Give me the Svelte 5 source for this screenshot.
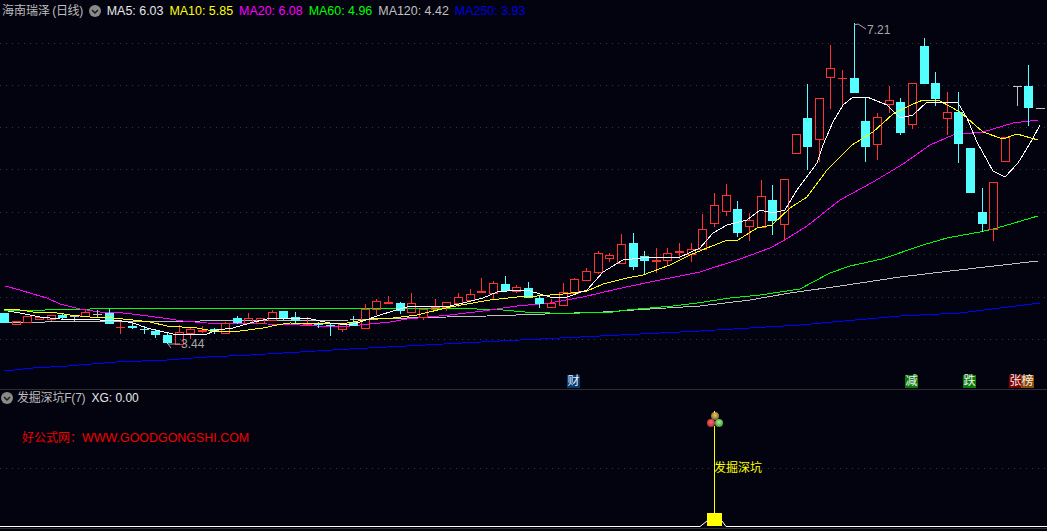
<script>
  const step = 11.64;
  const x0 = 4;

  // c = colour (r red, c cyan, w white), body top/bottom, wick high/low, in screen px
  const bars = [
    ['c',313,323,313,323],['r',321,324,321,324],['r',316,322,316,322],['r',317,319,316,320],
    ['r',315,319,315,321],['c',315,318,313,319],['w',316,316,315,322],['r',312,316,309,317],
    ['w',314,315,310,317],['c',313,324,309,324],['r',327,327,322,334],['c',326,328,323,329],
    ['c',329,330,326,334],['c',331,335,329,338],['c',335,343,332,344],['r',332,344,325,344],
    ['r',329,333,327,339],['f',330,332,326,333],['c',329,332,328,334],['r',323,333,322,334],
    ['c',318,323,316,324],['r',318,323,313,324],['r',318,323,318,323],['r',312,320,310,321],
    ['c',311,318,311,320],['c',317,321,312,324],['f',323,325,317,326],['c',324,325,322,328],
    ['c',325,326,323,336],['r',324,329,323,332],
    ['c',322,326,316,326],['r',309,328,304,328],['r',301,309,299,315],['f',302,304,296,304],
    ['c',303,311,302,314],['r',303,312,293,312],['r',309,317,309,320],['r',307,309,299,310],
    ['r',302,307,302,311],['r',297,303,293,307],['r',294,300,289,300],['f',291,293,278,293],
    ['r',283,293,281,300],['c',284,291,276,292],['r',287,291,285,293],['c',288,298,282,298],
    ['c',298,304,295,308],['r',303,307,299,307],['r',292,305,283,305],['r',279,293,278,293],
    ['r',271,280,268,281],['r',253,272,251,274],['r',255,258,253,262],['r',244,263,234,263],
    ['c',243,267,233,270],['c',256,261,251,274],['f',260,262,248,273],['r',253,260,248,265],
    ['f',251,253,243,259],['r',249,254,243,262],['r',229,249,214,250],['r',205,223,193,227],
    ['r',195,211,184,216],['c',209,233,201,237],['r',220,226,213,241],['r',196,227,180,228],
    ['c',200,221,185,235],['r',179,224,179,241],['r',134,153,134,153],['c',118,147,84,170],
    ['r',98,139,98,162],['r',68,77,45,109],['r',78,78,70,106],['c',78,93,23,93],
    ['c',121,147,98,162],['r',117,144,113,160],['r',100,104,86,113],['c',102,133,98,135],
    ['r',83,124,83,129],['c',46,84,38,84],['c',83,99,72,106],['r',112,118,92,135],
    ['c',112,144,92,163],['c',148,193,148,193],['c',212,224,188,232],['r',182,229,182,241],
    ['r',137,161,137,162],['w',86,86,86,106],['c',86,108,65,126],['w',108,108,108,108]
  ];

  const candles = bars.map(([kind, top, bottom, high, low], i) => ({
    kind, top, bottom, high, low, x: Math.round(x0 + step * i)
  }));

  const ma5 = [[8,311],[20,313],[40,317],[60,319],[100,320],[117,320],[133,323],[147,328],[160,331],[173,334],[207,334],[217,330],[233,328],[250,323],[267,319],[280,318],[307,318],[320,321],[330,323],[350,325],[363,321],[380,315],[393,311],[410,306],[430,306],[450,306],[463,303],[483,298],[497,292],[517,290],[530,291],[550,297],[567,297],[587,290],[603,272],[623,260],[650,257],[680,257],[700,248],[713,233],[727,225],[747,220],[760,210],[773,213],[785,210],[797,190],[817,163],[823,145],[833,122],[843,105],[853,97],[867,97],[887,105],[900,118],[913,115],[927,102],[947,102],[958,103],[967,118],[977,142],[993,171],[1005,177],[1018,163],[1032,140],[1040,125]];
  const ma10 = [[4,309],[20,310],[33,312],[57,313],[70,315],[90,317],[113,318],[133,320],[150,322],[167,326],[197,328],[213,331],[240,331],[263,328],[277,325],[290,323],[333,324],[347,323],[370,319],[393,318],[417,315],[450,307],[467,304],[490,300],[517,297],[537,296],[563,294],[587,291],[603,284],[627,278],[643,275],[670,265],[690,255],[707,248],[725,241],[738,240],[757,228],[772,225],[790,208],[807,197],[827,170],[852,145],[873,132],[893,114],[913,104],[923,100],[940,101],[960,112],[983,132],[1003,139],[1017,134],[1038,140]];
  const ma20 = [[5,286],[20,290],[33,294],[47,298],[60,304],[72,307],[80,309],[100,312],[123,313],[140,315],[163,318],[183,321],[207,323],[267,324],[300,325],[333,327],[350,326],[390,322],[407,319],[450,315],[483,311],[517,306],[550,303],[583,297],[617,289],[650,282],[700,272],[740,259],[770,248],[783,241],[807,226],[840,200],[873,182],[903,164],[930,145],[953,135],[983,132],[1013,123],[1038,120]];
  const ma60 = [[4,310],[45,310],[46,309],[90,309],[91,308],[208,308],[230,309],[231,308],[350,308],[477,309],[503,310],[525,312],[550,313],[580,313],[613,312],[627,310],[650,308],[673,306],[697,303],[730,298],[760,295],[800,289],[830,273],[850,266],[882,259],[923,245],[947,238],[980,232],[997,228],[1038,216]];
  const ma120 = [[4,322],[45,322],[50,321],[200,321],[350,320],[407,318],[487,316],[545,314],[603,312],[650,309],[700,306],[750,300],[790,293],[840,286],[900,277],[950,271],[1038,261]];
  const ma250 = [[4,371],[33,368],[67,366],[117,362],[167,360],[207,357],[250,355],[300,352],[350,349],[500,341],[700,331],[800,325],[900,316],[960,313],[1040,303]];

  const pts = (line) => line.map((p) => p.join(',')).join(' ');
  const grid = [43, 85, 127, 169, 212, 254, 297, 339];

  const legend = [
    { text: 'MA5: 6.03', cls: 'white' },
    { text: 'MA10: 5.85', cls: 'yellow' },
    { text: 'MA20: 6.08', cls: 'magenta' },
    { text: 'MA60: 4.96', cls: 'green' },
    { text: 'MA120: 4.42', cls: 'gray' },
    { text: 'MA250: 3.93', cls: 'blue' }
  ];

  const tags = [
    { x: 567, label: '财', cls: 'tag-blue' },
    { x: 905, label: '减', cls: 'tag-green' },
    { x: 963, label: '跌', cls: 'tag-green' },
    { x: 1009, label: '张', cls: 'tag-red' },
    { x: 1021, label: '榜', cls: 'tag-brown' }
  ];
</script>

<div class="page">
  <section class="upper">
    <svg class="chart" width="1047" height="389" viewBox="0 0 1047 389">
      {#each grid as y}
        <line class="grid" x1="0" x2="1047" y1={y + 0.5} y2={y + 0.5} />
      {/each}

      <polyline class="ma l250" points={pts(ma250)} />
      <polyline class="ma l120" points={pts(ma120)} />
      <polyline class="ma l60" points={pts(ma60)} />
      <polyline class="ma l20" points={pts(ma20)} />

      {#each candles as c}
        <g class={'bar ' + c.kind}>
          {#if c.high < c.top}
            <line x1={c.x + 0.5} x2={c.x + 0.5} y1={c.high} y2={c.top} />
          {/if}
          {#if c.low > c.bottom}
            <line x1={c.x + 0.5} x2={c.x + 0.5} y1={c.bottom} y2={c.low} />
          {/if}
          {#if c.kind === 'r' && c.bottom > c.top}
            <rect class="hollow" x={c.x - 3.5} y={c.top + 0.5} width="8" height={c.bottom - c.top} />
          {:else if c.bottom === c.top}
            <line x1={c.x - 4} x2={c.x + 5} y1={c.top + 0.5} y2={c.top + 0.5} />
          {:else}
            <rect class="solid" x={c.x - 4} y={c.top} width="9" height={c.bottom - c.top} />
          {/if}
        </g>
      {/each}

      <polyline class="ma l10" points={pts(ma10)} />
      <polyline class="ma l5" points={pts(ma5)} />

      <polyline class="note" points="854,25 858,24 866,29" />
      <text class="price" x="867" y="34">7.21</text>
      <polyline class="note" points="171,348 168,344 180,344" />
      <text class="price" x="181" y="348">3.44</text>
    </svg>

    <div class="legend">
      <span class="name">海南瑞泽 <span class="period">(日线)</span></span>
      <svg class="chev" width="12" height="12" viewBox="0 0 12 12">
        <circle cx="6" cy="6" r="6" />
        <path d="M3 5 L6 8 L9 5" />
      </svg>
      {#each legend as item}
        <span class={'ma-value ' + item.cls}>{item.text}</span>
      {/each}
    </div>

    {#each tags as t}
      <span class={'tag ' + t.cls} style:left={t.x + 'px'}>{t.label}</span>
    {/each}
  </section>

  <section class="lower">
    <svg class="chart" width="1047" height="141" viewBox="0 390 1047 141">
      <defs>
        <radialGradient id="ball-gold" cx="0.5" cy="0.4" r="0.6">
          <stop offset="0" stop-color="#ffc53a" />
          <stop offset="1" stop-color="#6b6248" />
        </radialGradient>
        <radialGradient id="ball-red" cx="0.5" cy="0.4" r="0.6">
          <stop offset="0" stop-color="#ff6a6a" />
          <stop offset="1" stop-color="#b03038" />
        </radialGradient>
        <radialGradient id="ball-green" cx="0.5" cy="0.4" r="0.6">
          <stop offset="0" stop-color="#a8f08a" />
          <stop offset="1" stop-color="#3f9a3a" />
        </radialGradient>
      </defs>
      <line class="grid" x1="0" x2="1047" y1="468.5" y2="468.5" />
      <line class="stem" x1="714.5" x2="714.5" y1="426" y2="514" />
      <rect class="block" x="707" y="513" width="15" height="13" />
      <polyline class="base" points="0,526.5 700,526.5 707,521" />
      <polyline class="base" points="722,521 726,526.5 1047,526.5" />
      <line class="base2" x1="0" x2="1047" y1="528.5" y2="528.5" />
      <circle cx="715" cy="416" r="4" fill="url(#ball-gold)" />
      <circle cx="711" cy="423" r="4" fill="url(#ball-red)" />
      <circle cx="719" cy="423" r="4" fill="url(#ball-green)" />
      <line class="tip" x1="714.5" x2="714.5" y1="411" y2="413" />
      <text class="signal" x="714" y="472">发掘深坑</text>
    </svg>

    <div class="legend">
      <svg class="chev first" width="12" height="12" viewBox="0 0 12 12">
        <circle cx="6" cy="6" r="6" />
        <path d="M3 5 L6 8 L9 5" />
      </svg>
      <span class="name tight">发掘深坑F(7)</span>
      <span class="white">XG: 0.00</span>
    </div>

    <div class="site">好公式网：<span class="url">WWW.GOODGONGSHI.COM</span></div>
  </section>
</div>

<style>
  :global(body) {
    margin: 0;
    background: #03030f;
  }

  .page {
    width: 1047px;
    height: 531px;
    overflow: hidden;
    background: #03030f;
    font-family: "Liberation Sans", "Noto Sans CJK SC", sans-serif;
    font-size: 12px;
  }

  .upper {
    position: relative;
    height: 389px;
    border-bottom: 1px solid #2e2e2e;
    box-sizing: content-box;
  }

  .lower {
    position: relative;
    height: 141px;
    overflow: hidden;
  }

  .chart {
    display: block;
  }

  .legend {
    position: absolute;
    top: 4px;
    left: 2px;
    display: flex;
    align-items: center;
    gap: 6px;
    line-height: 14px;
    white-space: nowrap;
  }

  .lower .legend {
    top: 1px;
    left: 1px;
  }

  .name {
    color: #bdbdbd;
    word-spacing: -1px;
  }

  .period {
    letter-spacing: -0.4px;
  }

  .tight {
    letter-spacing: -0.2px;
  }

  .ma-value {
    font-size: 12.45px;
  }

  .chev.first {
    margin-right: -2px;
  }

  .chev circle {
    fill: #8a8a8a;
  }

  .chev path {
    fill: none;
    stroke: #1a1a1a;
    stroke-width: 1.5;
  }

  .white { color: #e8e8e8; }
  .yellow { color: #ffff00; }
  .magenta { color: #ff00ff; }
  .green { color: #00ff00; }
  .gray { color: #c0c0c0; }
  .blue { color: #0000e0; }

  .grid {
    stroke: #3a3a3a;
    stroke-width: 1;
    stroke-dasharray: 1 5;
  }

  .ma {
    fill: none;
    stroke-width: 1;
    shape-rendering: crispEdges;
  }

  .l5 { stroke: #ffffff; }
  .l10 { stroke: #ffff00; }
  .l20 { stroke: #ff00ff; }
  .l60 { stroke: #00ff00; }
  .l120 { stroke: #c0c0c0; }
  .l250 { stroke: #0000ff; }

  .bar line {
    stroke-width: 1;
    shape-rendering: crispEdges;
  }

  .bar rect {
    shape-rendering: crispEdges;
  }

  .bar.r line, .bar.f line { stroke: #ff3232; }
  .bar.c line { stroke: #54ffff; }
  .bar.w line { stroke: #c0c0c0; }

  .bar .hollow {
    fill: none;
    stroke: #ff3232;
    stroke-width: 1;
  }

  .bar.c .solid { fill: #54ffff; }
  .bar.f .solid { fill: #ff3232; }
  .bar.w .solid { fill: #c0c0c0; }

  .note {
    fill: none;
    stroke: #a8a8a8;
    stroke-width: 1;
  }

  .price {
    fill: #a8a8a8;
    font-size: 12px;
  }

  .tag {
    position: absolute;
    top: 375px;
    width: 13px;
    height: 13px;
    line-height: 13px;
    font-size: 12px;
    text-align: center;
    color: #f0f0f0;
  }

  .tag-blue { background: #063a6e; color: #e8f0f8; }
  .tag-green { background: #0a7a0a; }
  .tag-red { background: #800000; }
  .tag-brown { background: #8c4a08; }

  .stem {
    stroke: #ffff00;
    stroke-width: 1;
  }

  .tip {
    stroke: #e8e8a0;
  }

  .block {
    fill: #ffff00;
  }

  .base {
    fill: none;
    stroke: #ffffff;
    stroke-width: 1;
  }

  .base2 {
    stroke: #2e2e2e;
  }

  .signal {
    fill: #ffff00;
    font-size: 12px;
  }

  .site {
    position: absolute;
    top: 40px;
    left: 22px;
    color: #f00000;
    font-size: 12px;
    line-height: 16px;
    white-space: nowrap;
  }

  .url {
    font-size: 12.45px;
  }
</style>
